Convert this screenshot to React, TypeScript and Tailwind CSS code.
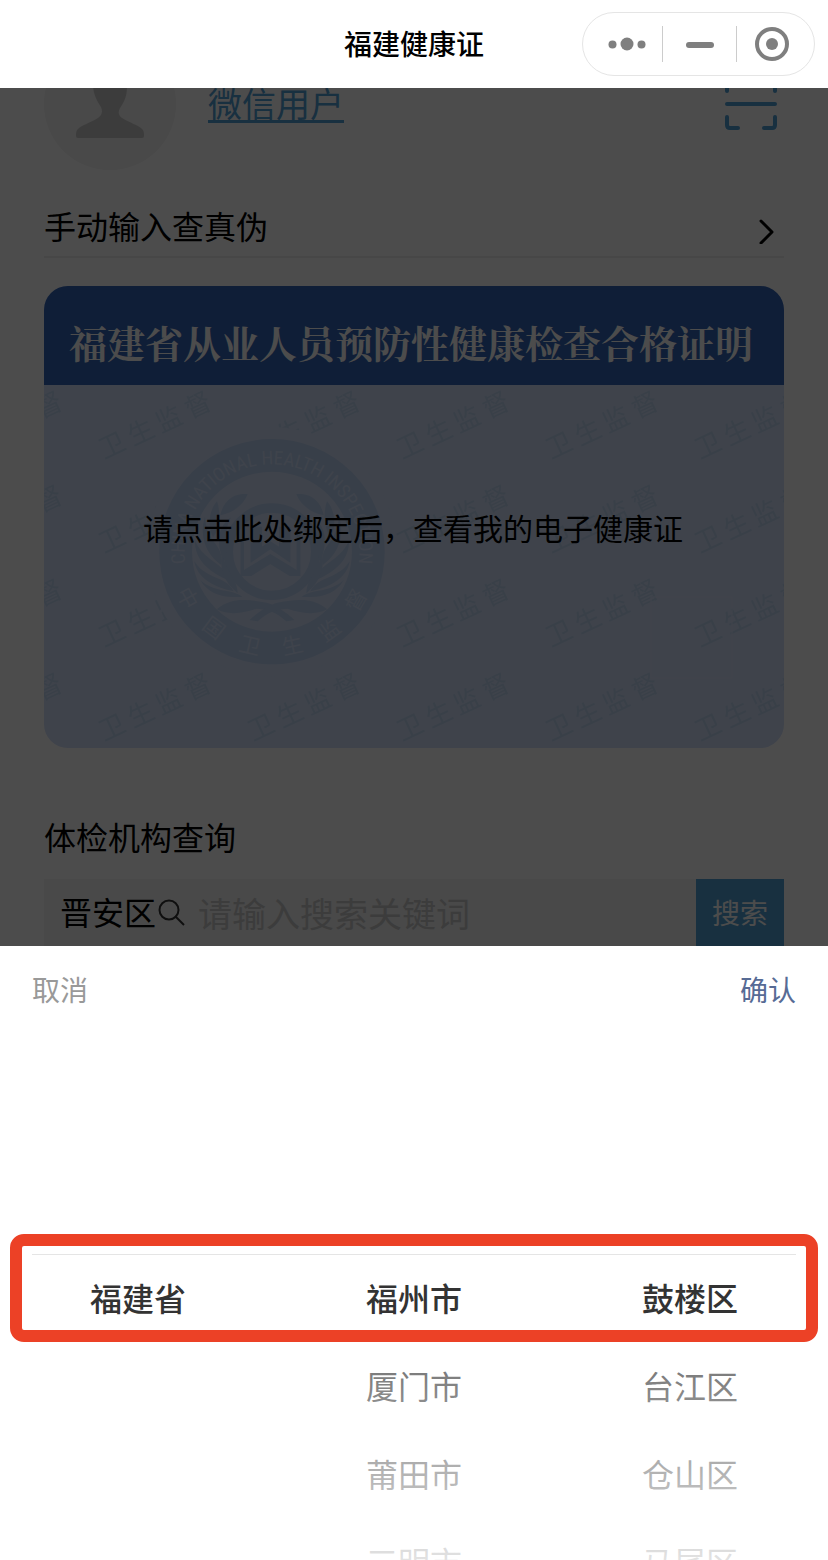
import React, { useState } from 'react';

interface PickerColumnProps {
  label: string;
  items: string[];
}

const provinces = ['福建省'];
const cities = ['福州市', '厦门市', '莆田市', '三明市'];
const districts = ['鼓楼区', '台江区', '仓山区', '马尾区'];

const ROW_HEIGHT = 88;

const sealChars = [
  { char: '中', x: 118, y: 502, angle: 61 },
  { char: '国', x: 196, y: 590, angle: 37 },
  { char: '卫', x: 302, y: 641, angle: 13 },
  { char: '生', x: 427, y: 641, angle: -12 },
  { char: '监', x: 536, y: 596, angle: -36 },
  { char: '督', x: 614, y: 508, angle: -60 },
];

const tileChars = [
  { char: '卫', x: 22, y: 58 },
  { char: '生', x: 51, y: 45 },
  { char: '监', x: 79, y: 32 },
  { char: '督', x: 108, y: 18 },
];

const Branch: React.FC = () => (
  <g>
    <path d="M294 193C262 188 222 206 212 256C250 248 280 226 294 193Z" />
    <path d="M202 214C180 240 172 280 190 322C208 300 216 258 202 214Z" />
    <path d="M166 260C150 310 162 366 214 404C222 372 204 350 190 332C176 312 168 290 166 260Z" />
    <path d="M244 262C206 288 198 336 222 396C236 366 230 336 230 312C231 292 236 276 244 262Z" />
    <path d="M136 334C136 388 174 424 238 452C232 420 204 404 180 386C160 372 146 354 136 334Z" />
    <path d="M218 366C208 412 220 452 264 490C262 456 246 438 236 420C226 402 220 386 218 366Z" />
    <path d="M134 394C142 440 184 470 252 484C240 456 208 448 180 434C158 424 144 410 134 394Z" />
    <path d="M152 450C174 488 214 506 278 500C258 484 226 484 200 476C178 470 164 462 152 450Z" />
    <path d="M202 538C250 496 308 512 350 518C376 524 412 548 434 570L410 574C384 548 350 536 320 536C284 548 240 558 202 538Z" />
  </g>
);

const Seal: React.FC = () => (
  <svg x="115" y="54" width="226" height="226" viewBox="28 27 678 678" className="overflow-visible">
    <defs>
      <path id="seal-arc" d="M122 458A262 262 0 1 1 612 458" />
    </defs>
    <circle cx="367" cy="365" r="374" fill="#d2e0fb" />
    <circle cx="367" cy="365" r="289" fill="none" stroke="#bbd2f4" strokeWidth="98" />
    <circle cx="367" cy="365" r="131" fill="none" stroke="#bbd2f4" strokeWidth="28" />
    <g fill="#bbd2f4">
      <Branch />
      <g transform="translate(734 0) scale(-1 1)">
        <Branch />
      </g>
      <path d="M273 290H283V420L362 372L441 420V290H452V438H420L362 402L305 438H273Z" />
      <path d="M303 290H337V350L362 334L388 350V290H422V398L362 358L303 398Z" />
    </g>
    <g fill="#d2e2fd">
      <text
        textAnchor="middle"
        fontSize="57"
        className="font-['Liberation_Sans_Narrow','Roboto_Condensed','Liberation_Sans',sans-serif]"
      >
        <textPath href="#seal-arc" startOffset="50%">
          CHINA NATIONAL HEALTH INSPECTION
        </textPath>
      </text>
      {sealChars.map((item) => (
        <text
          key={item.char}
          textAnchor="middle"
          dominantBaseline="central"
          fontSize="64"
          transform={`translate(${item.x} ${item.y}) rotate(${item.angle})`}
        >
          {item.char}
        </text>
      ))}
    </g>
  </svg>
);

const Watermark: React.FC = () => (
  <svg className="absolute inset-0 h-full w-full" aria-hidden="true">
    <defs>
      <pattern id="tile" x="45" y="0" width="149" height="94" patternUnits="userSpaceOnUse">
        {tileChars.map((item) => (
          <text
            key={item.char}
            fill="#c0d6f2"
            textAnchor="middle"
            dominantBaseline="central"
            fontSize="26"
            transform={`translate(${item.x} ${item.y}) rotate(-25)`}
          >
            {item.char}
          </text>
        ))}
      </pattern>
    </defs>
    <rect width="100%" height="100%" fill="url(#tile)" />
    <Seal />
    <rect x="607" y="212" width="81" height="81" fill="none" stroke="#d8e4fd" />
  </svg>
);

const PickerColumn: React.FC<PickerColumnProps> = ({ label, items }) => {
  const [selected, setSelected] = useState(0);

  return (
    <ul aria-label={label} style={{ transform: `translateY(${-selected * ROW_HEIGHT}px)` }}>
      {items.map((item, index) => (
        <li key={item}>
          <button
            type="button"
            onClick={() => setSelected(index)}
            className={
              index === selected
                ? 'block h-[88px] w-full pb-1 text-[32px] font-medium text-[#333333]'
                : 'block h-[88px] w-full pb-1 text-[32px] text-[#333333]'
            }
          >
            {item}
          </button>
        </li>
      ))}
    </ul>
  );
};

const App: React.FC = () => {
  const [keyword, setKeyword] = useState('');

  return (
    <div className="flex h-screen flex-col overflow-hidden bg-white font-['Noto_Sans_CJK_SC',sans-serif] text-black">
      <header className="grid h-[88px] shrink-0 grid-cols-[1fr_auto_1fr] items-center px-[13px]">
        <h1 className="col-start-2 pb-0.5 text-[28px] font-medium">福建健康证</h1>
        <div className="flex h-16 w-[233px] items-center justify-self-end rounded-full border border-[#e5e5e5] text-[#7f7f7f]">
          <button type="button" aria-label="更多" className="flex w-[79px] justify-center pl-2">
            <svg width="38" height="14" viewBox="0 0 38 14" fill="currentColor">
              <circle cx="4.5" cy="7.500" r="4" />
              <circle cx="19" cy="7" r="6.500" />
              <circle cx="33.500" cy="7.500" r="4" />
            </svg>
          </button>
          <span className="h-9 w-px bg-[#cccccc]" />
          <button type="button" aria-label="最小化" className="flex w-[73px] justify-center">
            <svg width="28" height="8" viewBox="0 0 28 8" fill="currentColor">
              <rect y="2" width="28" height="6" rx="3" />
            </svg>
          </button>
          <span className="h-9 w-px bg-[#cccccc]" />
          <button type="button" aria-label="关闭" className="flex flex-1 justify-center pr-2">
            <svg width="34" height="34" viewBox="0 0 34 34">
              <circle cx="17" cy="17" r="15" fill="none" stroke="currentColor" strokeWidth="4" />
              <circle cx="17" cy="17" r="6" fill="currentColor" />
            </svg>
          </button>
        </div>
      </header>

      <main className="relative min-h-0 flex-1 overflow-hidden px-11">
        {/* Page is scrolled, the user row sits partly under the title bar */}
        <div className="-mt-[50px] flex h-[132px] items-center">
          <svg width="132" height="132" viewBox="0 0 132 132" aria-hidden="true">
            <circle cx="66" cy="66" r="66" fill="#f3f3f3" />
            <path
              d="M66 28C54 28 49 36 49 48C50 59 54 64 57 69C59 74 58 77 54 80C46 85 38 87 34 91C32 93 32 95 32 98Q32 100 34 100H98Q100 100 100 98C100 95 100 93 98 91C94 87 86 85 78 80C74 77 74 74 76 70C80 64 83 59 83 48C83 36 78 28 66 28Z"
              fill="#c9c9c9"
            />
          </svg>
          <a
            href="#user"
            className="ml-8 pb-1 text-[34px] text-[#50a0d6] underline decoration-[3px] underline-offset-[3px]"
          >
            微信用户
          </a>
          <button type="button" aria-label="扫一扫" className="mr-[7px] ml-auto">
            <svg
              width="52"
              height="52"
              viewBox="0 0 52 52"
              fill="none"
              stroke="#50a0d6"
              strokeWidth="4"
              strokeLinecap="round"
            >
              <path d="M2 13V5Q2 2 5 2H13M39 2H47Q50 2 50 5V13M50 39V47Q50 50 47 50H39M13 50H5Q2 50 2 47V39M2 26H50" />
            </svg>
          </button>
        </div>

        <a
          href="#verify"
          className="mt-7 flex h-[60px] items-center justify-between border-b-2 border-[#eeeeee] pr-2.5 pb-1 text-[32px]"
        >
          手动输入查真伪
          <svg
            width="16"
            height="38"
            viewBox="0 0 16 38"
            fill="none"
            stroke="currentColor"
            strokeWidth="3"
            strokeLinecap="round"
            strokeLinejoin="round"
            aria-hidden="true"
          >
            <path d="M3 15L14 26L3 37" />
          </svg>
        </a>

        <section className="mt-7 overflow-hidden rounded-3xl bg-[#d2e0fb]">
          <h2 className="flex h-[99px] items-center justify-center bg-[#3264b7] pt-3 pr-1.5 text-[38px] font-bold whitespace-nowrap text-white font-['Noto_Serif_CJK_SC','Noto_Sans_CJK_SC',serif]">
            福建省从业人员预防性健康检查合格证明
          </h2>
          <div className="relative h-[363px]">
            <Watermark />
            <button type="button" className="relative block w-full pt-[118px] pr-0.5 text-[30px] leading-[48px]">
              请点击此处绑定后，查看我的电子健康证
            </button>
          </div>
        </section>

        <h2 className="mt-16 text-[32px] leading-[48px]">体检机构查询</h2>
        <form
          className="mt-[19px] flex h-[68px] items-center bg-[#f4f4f4]"
          onSubmit={(e) => e.preventDefault()}
        >
          <button type="button" className="ml-4 pb-1 text-[32px]">
            晋安区
          </button>
          <svg
            width="28"
            height="28"
            viewBox="0 0 28 28"
            fill="none"
            stroke="#333333"
            strokeWidth="2"
            className="ml-0.5"
            aria-hidden="true"
          >
            <circle cx="11" cy="11" r="9.500" />
            <path d="M17 17L26 26" />
          </svg>
          <input
            type="text"
            aria-label="搜索关键词"
            placeholder="请输入搜索关键词"
            value={keyword}
            onChange={(e) => setKeyword(e.target.value)}
            className="ml-3 h-full min-w-0 flex-1 bg-transparent pb-0.5 text-[34px] outline-none placeholder:text-[#c8c8c8]"
          />
          <button type="submit" className="h-full w-[88px] bg-[#50a0d6] pb-0.5 text-[28px] text-white">
            搜索
          </button>
        </form>

        <div className="absolute inset-0 bg-black/70" />
      </main>

      <section role="dialog" aria-label="选择地区" className="relative shrink-0 bg-white">
        <div className="flex h-[88px] items-center justify-between px-8 pb-0.5 text-[28px]">
          <button type="button" className="text-[#999999]">
            取消
          </button>
          <button type="button" className="text-[#576b95]">
            确认
          </button>
        </div>
        <div className="relative h-[526px] overflow-hidden">
          <div className="grid grid-cols-3 pt-[221px]">
            <PickerColumn label="省份" items={provinces} />
            <PickerColumn label="城市" items={cities} />
            <PickerColumn label="区县" items={districts} />
          </div>
          <div className="pointer-events-none absolute inset-x-0 top-0 h-[220px] bg-linear-to-t from-white/28 to-white/86" />
          <div className="pointer-events-none absolute inset-x-8 top-[220px] h-[88px] border-y border-[#e5e5e5]" />
          <div className="pointer-events-none absolute inset-x-0 top-[308px] bottom-0 bg-linear-to-b from-white/28 to-white/86" />
          <div className="pointer-events-none absolute inset-x-2.5 top-[200px] h-[108px] rounded-[14px] border-12 border-[#ec4126]" />
        </div>
      </section>
    </div>
  );
};

export default App;
